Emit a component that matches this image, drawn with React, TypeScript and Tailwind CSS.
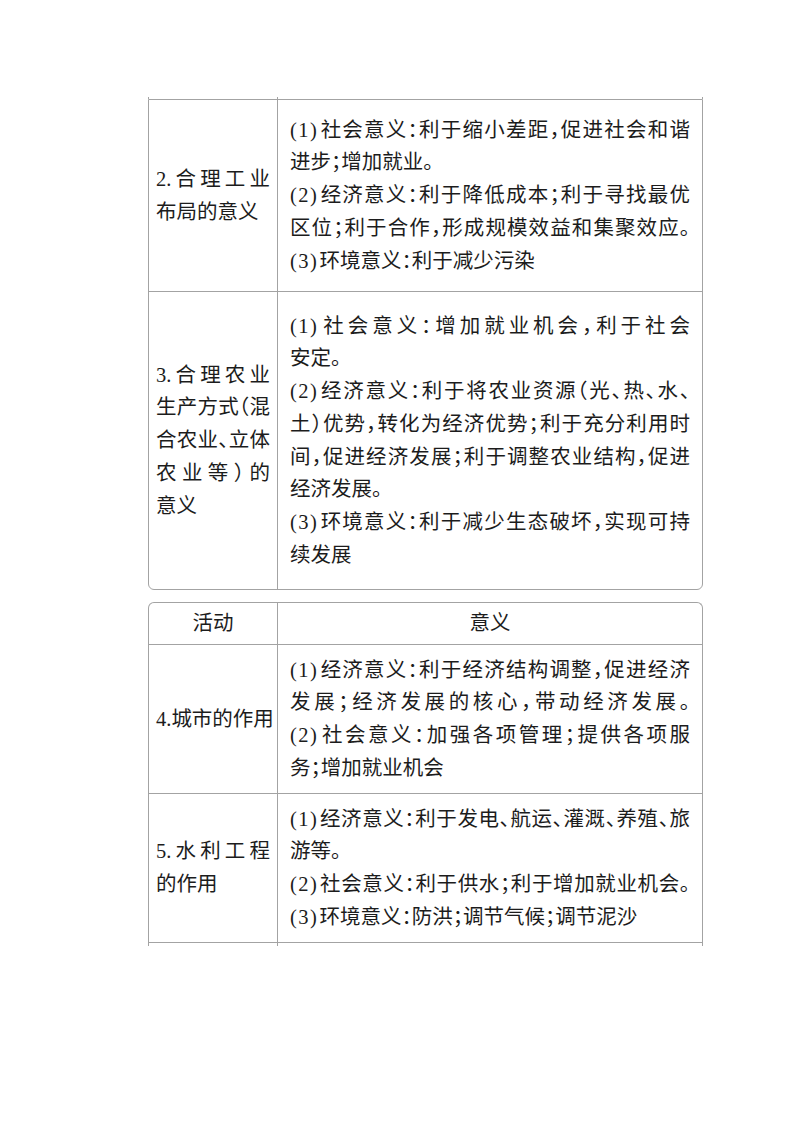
type Line = { t: string; j?: boolean };
type Row = { h: string; left: Line[]; right: Line[] };

const topRows: Row[] = [
  {
    h: "h-[192px] border-b",
    left: [{ t: "2.合理工业", j: true }, { t: "布局的意义" }],
    right: [
      { t: "(1)社会意义：利于缩小差距，促进社会和谐", j: true },
      { t: "进步；增加就业。" },
      { t: "(2)经济意义：利于降低成本；利于寻找最优", j: true },
      { t: "区位；利于合作，形成规模效益和集聚效应。", j: true },
      { t: "(3)环境意义：利于减少污染" },
    ],
  },
  {
    h: "h-[297px]",
    left: [
      { t: "3.合理农业", j: true },
      { t: "生产方式（混", j: true },
      { t: "合农业、立体", j: true },
      { t: "农业等）的", j: true },
      { t: "意义" },
    ],
    right: [
      { t: "(1)社会意义：增加就业机会，利于社会", j: true },
      { t: "安定。" },
      { t: "(2)经济意义：利于将农业资源（光、热、水、", j: true },
      { t: "土）优势，转化为经济优势；利于充分利用时", j: true },
      { t: "间，促进经济发展；利于调整农业结构，促进", j: true },
      { t: "经济发展。" },
      { t: "(3)环境意义：利于减少生态破坏，实现可持", j: true },
      { t: "续发展" },
    ],
  },
];

const bottomRows: Row[] = [
  {
    h: "h-[149px] border-b",
    left: [{ t: "4.城市的作用" }],
    right: [
      { t: "(1)经济意义：利于经济结构调整，促进经济", j: true },
      { t: "发展；经济发展的核心，带动经济发展。", j: true },
      { t: "(2)社会意义：加强各项管理；提供各项服", j: true },
      { t: "务；增加就业机会" },
    ],
  },
  {
    h: "h-[149px] border-b",
    left: [{ t: "5.水利工程", j: true }, { t: "的作用" }],
    right: [
      { t: "(1)经济意义：利于发电、航运、灌溉、养殖、旅", j: true },
      { t: "游等。" },
      { t: "(2)社会意义：利于供水；利于增加就业机会。", j: true },
      { t: "(3)环境意义：防洪；调节气候；调节泥沙" },
    ],
  },
];

// "(1)" numbers are set a little wider than the plain serif digits
function LineText({ t }: { t: string }) {
  if (t.startsWith("(")) {
    const k = t.indexOf(")") + 1;
    return (
      <>
        <span className="mr-[1px] tracking-[1.5px]">{t.slice(0, k)}</span>
        {t.slice(k)}
      </>
    );
  }
  return <>{t}</>;
}

function Text({ lines }: { lines: Line[] }) {
  return (
    <div className="w-full">
      {lines.map((l, i) => (
        <div
          key={i}
          className={
            l.j
              ? "whitespace-nowrap leading-[32.7px] text-justify [text-align-last:justify]"
              : "whitespace-nowrap leading-[32.7px]"
          }
        >
          <LineText t={l.t} />
        </div>
      ))}
    </div>
  );
}

function TableRow({ row }: { row: Row }) {
  return (
    <div className={`grid grid-cols-[129px_1fr] border-[#a3a3a3] ${row.h}`}>
      <div className="flex items-center border-r border-[#a3a3a3] px-[7px]">
        <Text lines={row.left} />
      </div>
      <div className="flex items-center pl-[12px] pr-[12px]">
        <Text lines={row.right} />
      </div>
    </div>
  );
}

// the vertical rules run a little past the cut-off edge of each table
function Stub({ h }: { h: string }) {
  return (
    <div className={`grid grid-cols-[129px_1fr] border-x border-[#a3a3a3] ${h}`}>
      <div className="border-r border-[#a3a3a3]" />
      <div />
    </div>
  );
}

export default function App() {
  return (
    <div className="min-h-[1123px] w-[794px] bg-white pl-[148px] pt-[97px] font-['Liberation_Serif','Noto_Sans_CJK_SC',serif] text-[20.5px] text-[#1c1c1c] [font-feature-settings:'halt']">
      <div className="w-[555px]">
        <Stub h="h-[2px]" />
        <div className="overflow-hidden rounded-b-[6px] border border-[#a3a3a3]">
          {topRows.map((r, i) => (
            <TableRow key={i} row={r} />
          ))}
        </div>

        <div className="mt-[12px] overflow-hidden rounded-t-[6px] border-x border-t border-[#a3a3a3]">
          <div className="grid h-[42px] grid-cols-[129px_1fr] border-b border-[#a3a3a3]">
            <div className="flex items-center justify-center border-r border-[#a3a3a3]">活动</div>
            <div className="flex items-center justify-center">意义</div>
          </div>
          {bottomRows.map((r, i) => (
            <TableRow key={i} row={r} />
          ))}
        </div>
        <Stub h="h-[3px]" />
      </div>
    </div>
  );
}
